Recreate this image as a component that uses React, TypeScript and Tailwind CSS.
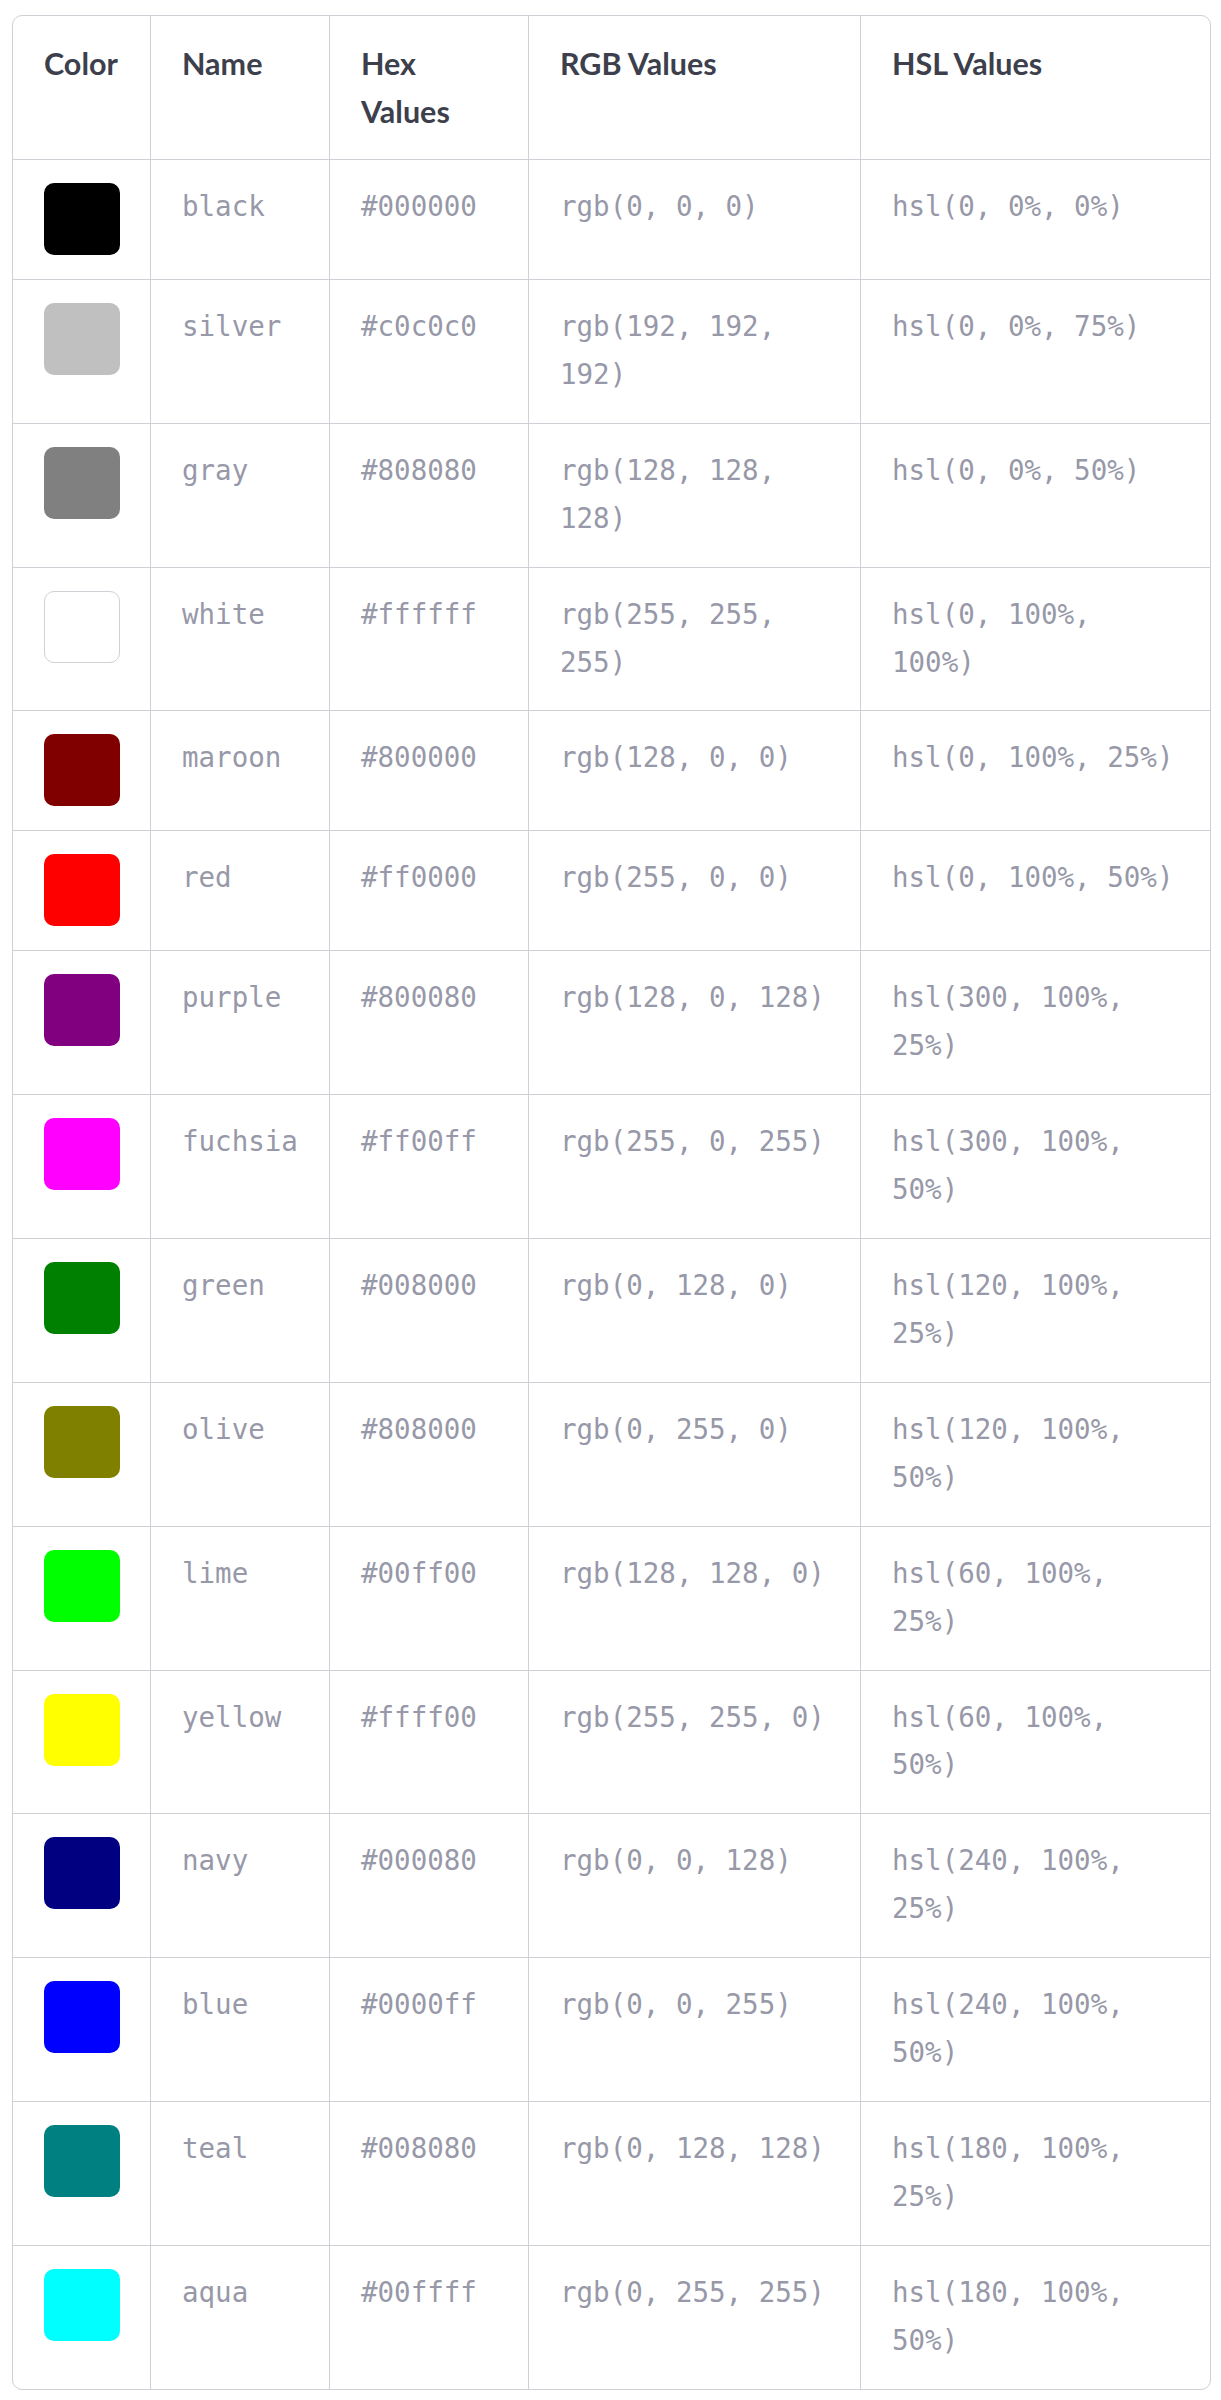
const COLORS = [
  { name: 'black', hex: '#000000', rgb: 'rgb(0, 0, 0)', hsl: 'hsl(0, 0%, 0%)', swatch: 'bg-[#000000]' },
  { name: 'silver', hex: '#c0c0c0', rgb: 'rgb(192, 192, 192)', hsl: 'hsl(0, 0%, 75%)', swatch: 'bg-[#c0c0c0]' },
  { name: 'gray', hex: '#808080', rgb: 'rgb(128, 128, 128)', hsl: 'hsl(0, 0%, 50%)', swatch: 'bg-[#808080]' },
  { name: 'white', hex: '#ffffff', rgb: 'rgb(255, 255, 255)', hsl: 'hsl(0, 100%, 100%)', swatch: 'bg-white border border-[#d0d0d7]' },
  { name: 'maroon', hex: '#800000', rgb: 'rgb(128, 0, 0)', hsl: 'hsl(0, 100%, 25%)', swatch: 'bg-[#800000]' },
  { name: 'red', hex: '#ff0000', rgb: 'rgb(255, 0, 0)', hsl: 'hsl(0, 100%, 50%)', swatch: 'bg-[#ff0000]' },
  { name: 'purple', hex: '#800080', rgb: 'rgb(128, 0, 128)', hsl: 'hsl(300, 100%, 25%)', swatch: 'bg-[#800080]' },
  { name: 'fuchsia', hex: '#ff00ff', rgb: 'rgb(255, 0, 255)', hsl: 'hsl(300, 100%, 50%)', swatch: 'bg-[#ff00ff]' },
  { name: 'green', hex: '#008000', rgb: 'rgb(0, 128, 0)', hsl: 'hsl(120, 100%, 25%)', swatch: 'bg-[#008000]' },
  { name: 'olive', hex: '#808000', rgb: 'rgb(0, 255, 0)', hsl: 'hsl(120, 100%, 50%)', swatch: 'bg-[#808000]' },
  { name: 'lime', hex: '#00ff00', rgb: 'rgb(128, 128, 0)', hsl: 'hsl(60, 100%, 25%)', swatch: 'bg-[#00ff00]' },
  { name: 'yellow', hex: '#ffff00', rgb: 'rgb(255, 255, 0)', hsl: 'hsl(60, 100%, 50%)', swatch: 'bg-[#ffff00]' },
  { name: 'navy', hex: '#000080', rgb: 'rgb(0, 0, 128)', hsl: 'hsl(240, 100%, 25%)', swatch: 'bg-[#000080]' },
  { name: 'blue', hex: '#0000ff', rgb: 'rgb(0, 0, 255)', hsl: 'hsl(240, 100%, 50%)', swatch: 'bg-[#0000ff]' },
  { name: 'teal', hex: '#008080', rgb: 'rgb(0, 128, 128)', hsl: 'hsl(180, 100%, 25%)', swatch: 'bg-[#008080]' },
  { name: 'aqua', hex: '#00ffff', rgb: 'rgb(0, 255, 255)', hsl: 'hsl(180, 100%, 50%)', swatch: 'bg-[#00ffff]' },
]

const HEADERS = ['Color', 'Name', 'Hex Values', 'RGB Values', 'HSL Values']

function cellClass(col: number, last: boolean): string {
  const right = col < 4 ? 'border-r' : ''
  const bottom = last ? '' : 'border-b'
  return `${right} ${bottom} border-[#cfcfd6] pl-[31px] pr-[30px] pt-[23px] pb-[24px]`
}

export default function App() {
  return (
    <div className="min-h-[2400px] bg-white pt-[15px] pl-[12px]">
      <div className="w-[1199px] rounded-[10px] border border-[#cfcfd6] overflow-hidden">
        <div className="grid grid-cols-[138px_179px_199px_332px_1fr]">
          {HEADERS.map((h, i) => (
            <div
              key={h}
              className={`${cellClass(i, false)} font-['Lato',sans-serif] text-[30.5px] font-bold leading-[48px] text-[#3d3f4c]`}
            >
              {h}
            </div>
          ))}
          {COLORS.map((c, r) => {
            const last = r === COLORS.length - 1
            const mono = "font-['DejaVu_Sans_Mono',monospace] text-[27.5px] leading-[47.9px] text-[#9798a8]"
            return [
              <div key={`${c.name}-sw`} className={cellClass(0, last)}>
                <div className={`h-[72px] w-[76px] rounded-[10px] ${c.swatch}`} />
              </div>,
              <div key={`${c.name}-n`} className={`${cellClass(1, last)} ${mono}`}>{c.name}</div>,
              <div key={`${c.name}-h`} className={`${cellClass(2, last)} ${mono}`}>{c.hex}</div>,
              <div key={`${c.name}-r`} className={`${cellClass(3, last)} ${mono}`}>{c.rgb}</div>,
              <div key={`${c.name}-s`} className={`${cellClass(4, last)} ${mono}`}>{c.hsl}</div>,
            ]
          })}
        </div>
      </div>
    </div>
  )
}
